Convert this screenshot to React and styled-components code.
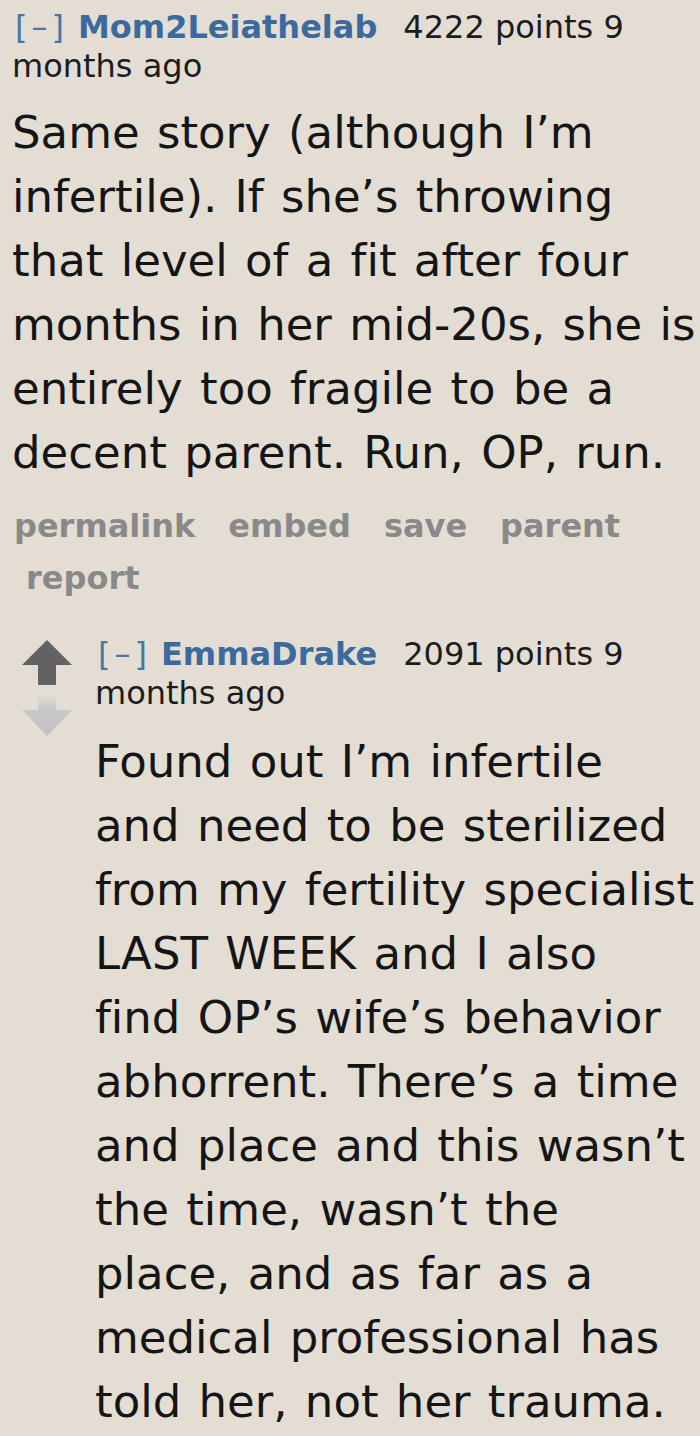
import React from 'react';
import styled, { createGlobalStyle } from 'styled-components';

const GlobalStyle = createGlobalStyle`
  html, body {
    margin: 0;
    padding: 0;
    background: #e3ddd4;
  }
  body {
    font-family: "DejaVu Sans", Verdana, sans-serif;
    font-variant-ligatures: none;
  }
`;

const Page = styled.div`
  width: 700px;
  height: 1436px;
  overflow: hidden;
  background: #e3ddd4;
  padding: 8px 3px 0 12px;
  box-sizing: border-box;
`;

const Comment = styled.div`
  display: flex;
  margin-left: ${(p) => (p.child ? '10px' : '0')};
  margin-top: ${(p) => (p.child ? '31px' : '0')};
`;

const Votes = styled.div`
  width: 73px;
  flex: none;
  padding-top: 5px;
`;

const Entry = styled.div`
  flex: 1;
  min-width: 0;
`;

const Tagline = styled.div`
  font-size: 32px;
  line-height: 39px;
  color: #1c1c1c;
`;

const Expand = styled.span`
  color: #4b76a6;
  margin: 0 10px 0 3px;
  letter-spacing: 4px;
`;

const Author = styled.span`
  color: #3b6a9e;
  font-weight: bold;
  margin-right: 26px;
`;

const Body = styled.div`
  font-size: 45px;
  line-height: 64px;
  word-spacing: 3px;
  color: #151515;
  margin-top: ${(p) => (p.child ? '17px' : '15px')};
`;

const Buttons = styled.ul`
  list-style: none;
  margin: 15px 0 0;
  padding: 0;
  display: flex;
  flex-wrap: wrap;
  font-size: 32px;
  line-height: 52px;
  font-weight: bold;
  color: #898989;
`;

const Button = styled.li`
  padding: 0 19px 0 14px;

  &:first-child {
    padding-left: 2px;
  }
`;

const Arrows = () => (
  <svg width="60" height="100" viewBox="0 0 60 100">
    <defs>
      <linearGradient id="down" x1="0" y1="0" x2="0" y2="1">
        <stop offset="0" stopColor="#e0dcd6" />
        <stop offset="0.35" stopColor="#c8c8c8" />
        <stop offset="1" stopColor="#c2c2c2" />
      </linearGradient>
    </defs>
    <path d="M25 0 L50 25 L34 25 L34 45 L16 45 L16 25 L0 25 Z" fill="#626262" />
    <path d="M16 55 L34 55 L34 70 L50 70 L25 96 L0 70 L16 70 Z" fill="url(#down)" />
  </svg>
);

const comments = [
  {
    author: 'Mom2Leiathelab',
    points: 4222,
    body: 'Same story (although I\u2019m infertile). If she\u2019s throwing that level of a fit after four months in her mid-20s, she is entirely too fragile to be a decent parent. Run, OP, run.'
  },
  {
    author: 'EmmaDrake',
    points: 2091,
    body: 'Found out I\u2019m infertile and need to be sterilized from my fertility specialist LAST WEEK and I also find OP\u2019s wife\u2019s behavior abhorrent. There\u2019s a time and place and this wasn\u2019t the time, wasn\u2019t the place, and as far as a medical professional has told her, not her trauma.'
  }
];

const CommentEntry = ({ c, buttons, child }) => (
  <Entry>
    <Tagline>
      <Expand>[–]</Expand>
      <Author>{c.author}</Author>
      {c.points} points 9 months ago
    </Tagline>
    <Body child={child}>{c.body}</Body>
    {buttons && (
      <Buttons>
        {['permalink', 'embed', 'save', 'parent', 'report'].map((b) => (
          <Button key={b}>{b}</Button>
        ))}
      </Buttons>
    )}
  </Entry>
);

export default function App() {
  return (
    <Page>
      <GlobalStyle />
      <Comment>
        <CommentEntry c={comments[0]} buttons />
      </Comment>
      <Comment child>
        <Votes>
          <Arrows />
        </Votes>
        <CommentEntry c={comments[1]} child />
      </Comment>
    </Page>
  );
}
